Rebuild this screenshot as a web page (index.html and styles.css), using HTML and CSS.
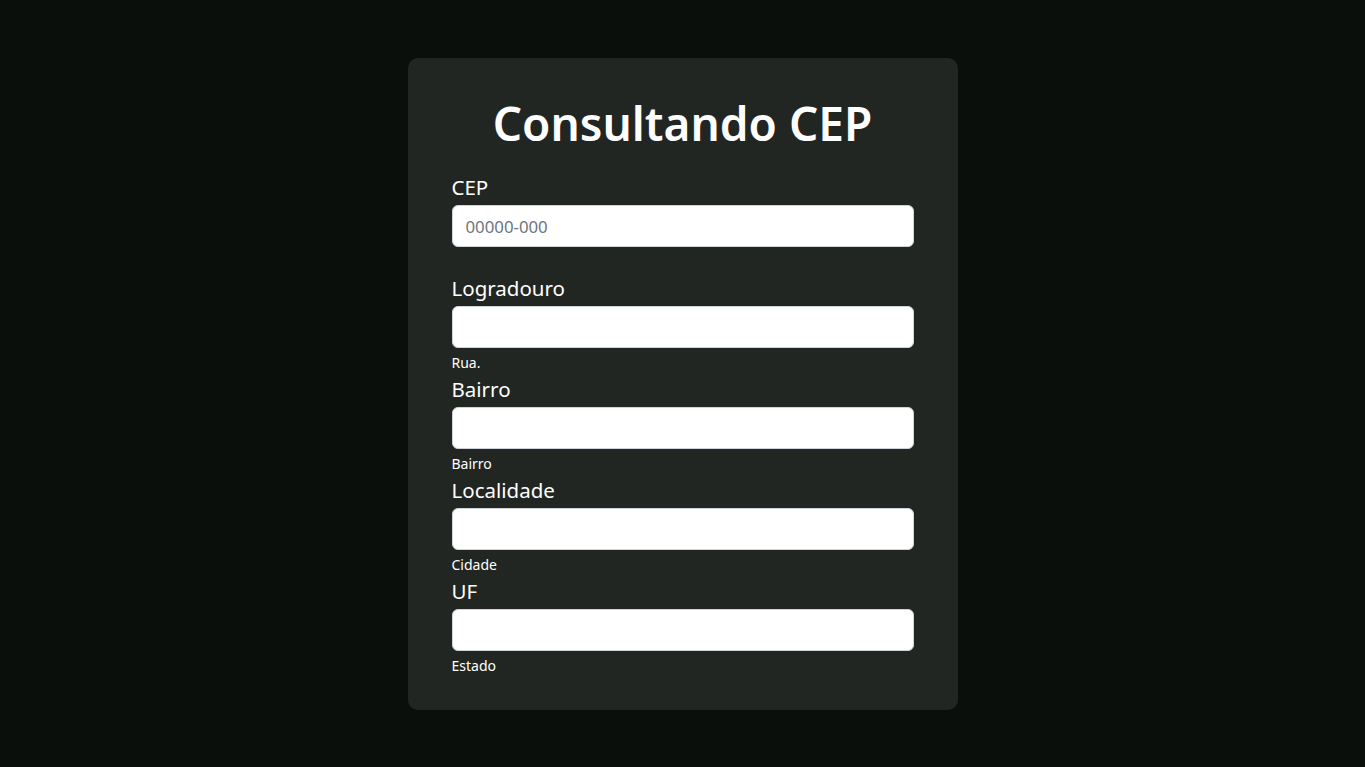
FILE: index.html
```html
<!DOCTYPE html>
<html lang="pt-BR">
<head>
<meta charset="utf-8">
<title>Consultando CEP</title>
<link rel="stylesheet" href="styles.css">
</head>
<body>
  <main class="card">
    <h1 class="title">Consultando CEP</h1>
    <form class="form">
      <div class="field field-cep">
        <label class="label" for="cep">CEP</label>
        <input class="input" id="cep" type="text" placeholder="00000-000">
      </div>
      <div class="field">
        <label class="label" for="logradouro">Logradouro</label>
        <input class="input" id="logradouro" type="text">
        <div class="hint">Rua.</div>
      </div>
      <div class="field">
        <label class="label" for="bairro">Bairro</label>
        <input class="input" id="bairro" type="text">
        <div class="hint">Bairro</div>
      </div>
      <div class="field">
        <label class="label" for="localidade">Localidade</label>
        <input class="input" id="localidade" type="text">
        <div class="hint">Cidade</div>
      </div>
      <div class="field">
        <label class="label" for="uf">UF</label>
        <input class="input" id="uf" type="text">
        <div class="hint">Estado</div>
      </div>
    </form>
  </main>
</body>
</html>
```
FILE: styles.css
```css
html, body {
  margin: 0;
  padding: 0;
}
body {
  background: #0b0f0b;
  font-family: "Noto Sans", "Open Sans", sans-serif;
  color: #ffffff;
  min-height: 767px;
  display: flex;
  justify-content: center;
  align-items: flex-start;
}
.card {
  margin-top: 58px;
  width: 550px;
  box-sizing: border-box;
  background: #222623;
  border-radius: 10px;
  padding: 35px 44px 34px;
}
.title {
  margin: 0 0 18px;
  font-size: 46px;
  line-height: 60px;
  font-weight: 600;
  text-align: center;
}
.form {
  display: flex;
  flex-direction: column;
}
.field {
  display: flex;
  flex-direction: column;
}
.field-cep {
  margin-bottom: 25px;
}
.label {
  font-size: 20.5px;
  line-height: 33px;
  margin-bottom: 1px;
}
.input {
  box-sizing: border-box;
  height: 42px;
  width: 100%;
  margin: 0;
  padding: 0 13px;
  border: 1px solid #ced4da;
  border-radius: 6px;
  background: #ffffff;
  font-family: inherit;
  font-size: 16.8px;
  color: #212529;
  outline: none;
}
.input::placeholder {
  color: #6c757d;
}
.hint {
  margin-top: 4px;
  font-size: 14px;
  line-height: 21px;
}
```
